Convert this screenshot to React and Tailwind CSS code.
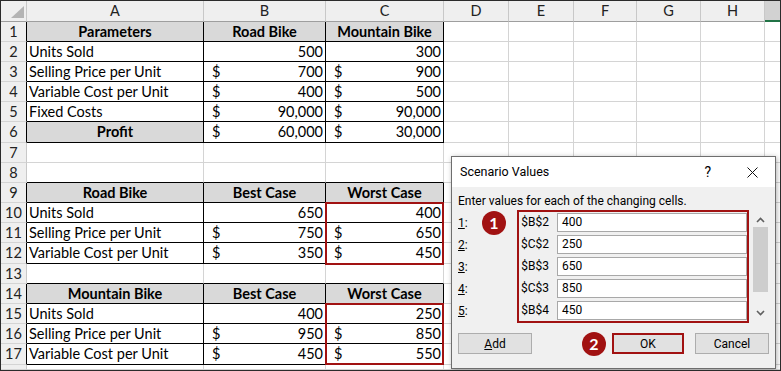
import React from 'react';

const COLS = ['w-[177px]', 'w-[122px]', 'w-[118px]'];
const EXTRA = ['w-[65px]', 'w-[65px]', 'w-[63px]', 'w-[64px]', 'w-[64px]'];
const LETTERS = ['A', 'B', 'C', 'D', 'E', 'F', 'G', 'H'];
const HEAD_W = ['w-[177px]', 'w-[122px]', 'w-[118px]', 'w-[65px]', 'w-[65px]', 'w-[63px]', 'w-[64px]', 'w-[64px]'];

const rows = [
  { n: 1, t: true, head: true, a: 'Parameters', b: 'Road Bike', c: 'Mountain Bike' },
  { n: 2, t: true, a: 'Units Sold', b: ['', '500'], c: ['', '300'] },
  { n: 3, t: true, a: 'Selling Price per Unit', b: ['$', '700'], c: ['$', '900'] },
  { n: 4, t: true, a: 'Variable Cost per Unit', b: ['$', '400'], c: ['$', '500'] },
  { n: 5, t: true, a: 'Fixed Costs', b: ['$', '90,000'], c: ['$', '90,000'] },
  { n: 6, t: true, h: 'h-[21px]', profit: true, a: 'Profit', b: ['$', '60,000'], c: ['$', '30,000'] },
  { n: 7 },
  { n: 8 },
  { n: 9, t: true, head: true, a: 'Road Bike', b: 'Best Case', c: 'Worst Case' },
  { n: 10, t: true, a: 'Units Sold', b: ['', '650'], c: ['', '400'] },
  { n: 11, t: true, a: 'Selling Price per Unit', b: ['$', '750'], c: ['$', '650'] },
  { n: 12, t: true, h: 'h-[21px]', a: 'Variable Cost per Unit', b: ['$', '350'], c: ['$', '450'] },
  { n: 13 },
  { n: 14, t: true, head: true, a: 'Mountain Bike', b: 'Best Case', c: 'Worst Case' },
  { n: 15, t: true, a: 'Units Sold', b: ['', '400'], c: ['', '250'] },
  { n: 16, t: true, a: 'Selling Price per Unit', b: ['$', '950'], c: ['$', '850'] },
  { n: 17, t: true, h: 'h-[21px]', a: 'Variable Cost per Unit', b: ['$', '450'], c: ['$', '550'] },
  // row 18 only peeks in at the bottom, its number is hidden
  { n: 18, h: 'flex-1', hideNum: true },
];

const values = [
  ['1', '$B$2', '400'],
  ['2', '$C$2', '250'],
  ['3', '$B$3', '650'],
  ['4', '$C$3', '850'],
  ['5', '$B$4', '450'],
];

function Content({ v, head, center }) {
  if (!v) return null;
  if (Array.isArray(v)) {
    return (
      <div className="flex w-full justify-between pl-[8px] pr-[2px]">
        <span>{v[0]}</span>
        <span>{v[1]}</span>
      </div>
    );
  }
  if (head || center) return <div className="w-full text-center font-bold">{v}</div>;
  return <div className="pl-[2px]">{v}</div>;
}

function SheetRow({ row, next }) {
  const inT = !!row.t;
  const bottomBlack = inT || (next && next.t);
  const rb = inT ? 'border-r-black' : 'border-r-[#d4d4d4]';
  const bb = bottomBlack ? 'border-b-black' : 'border-b-[#d4d4d4]';
  const vals = [row.a, row.b, row.c];

  return (
    <div className={`flex ${row.h || 'h-[20px]'} shrink-0`}>
      <div
        className={`w-[26px] shrink-0 flex items-center justify-center bg-[#efefef] border-r border-b border-b-[#d4d4d4] text-[#222] ${
          inT ? 'border-r-black' : 'border-r-[#c8c8c8]'
        }`}
      >
        {row.hideNum ? null : row.n}
      </div>
      {COLS.map((w, i) => {
        const gray = row.head || (row.profit && i === 0);
        return (
          <div
            key={i}
            className={`${w} shrink-0 flex items-center overflow-hidden whitespace-nowrap border-r border-b ${rb} ${bb} ${
              gray ? 'bg-[#d9d9d9]' : 'bg-white'
            }`}
          >
            <Content v={vals[i]} head={row.head} center={row.profit && i === 0} />
          </div>
        );
      })}
      {EXTRA.map((w, i) => (
        <div key={i} className={`${w} shrink-0 border-r border-b border-[#d4d4d4]`} />
      ))}
      <div className="flex-1 border-b border-[#d4d4d4]" />
    </div>
  );
}

function ScenarioDialog() {
  return (
    <div className="absolute left-[450px] top-[155px] w-[325px] h-[213px] border border-[#6e6e6e] bg-[#f0f0f0] shadow-[1px_1px_5px_rgba(0,0,0,0.3)] font-['Roboto',sans-serif] text-[12px] text-black">
      <div className="h-[30px] bg-white flex items-center pl-[8px] pr-[17px]">
        <span className="flex-1 text-[12.5px]">Scenario Values</span>
        <span className="mr-[36px] text-[14px]">?</span>
        <svg width="11" height="11" viewBox="0 0 11 11">
          <path d="M0.5 0.5L10.5 10.5M10.5 0.5L0.5 10.5" stroke="#111" strokeWidth="1" />
        </svg>
      </div>

      <div className="relative px-[6px] pt-[6px]">
        <div className="leading-[16px]">Enter values for each of the changing cells.</div>

        <div className="mt-[1px] flex">
          <div className="w-[59px] flex flex-col gap-[3px] pt-[3px]">
            {values.map(([n]) => (
              <div key={n} className="h-[19px] flex items-center">
                <span className="underline">{n}</span>:
              </div>
            ))}
          </div>

          <div className="w-[232px] h-[113px] border-2 border-[#a11212] flex flex-col gap-[3px] py-[1px]">
            {values.map(([n, ref, val]) => (
              <div key={n} className="h-[19px] flex">
                <div className="w-[38px] pr-[8px] text-right leading-[19px]">{ref}</div>
                <div className="flex-1 bg-white border border-[#a8a8a8] pl-[4px] leading-[17px]">{val}</div>
              </div>
            ))}
          </div>

          <div className="ml-[4px] mt-[2px] w-[15px] h-[109px] flex flex-col">
            <div className="h-[15px] flex items-center justify-center">
              <svg width="9" height="6" viewBox="0 0 9 6">
                <path d="M1 5L4.5 1.5L8 5" fill="none" stroke="#606060" strokeWidth="1.6" />
              </svg>
            </div>
            <div className="h-[65px] bg-[#cdcdcd]" />
            <div className="flex-1 flex items-end justify-center pb-[5px]">
              <svg width="9" height="6" viewBox="0 0 9 6">
                <path d="M1 1L4.5 4.5L8 1" fill="none" stroke="#606060" strokeWidth="1.6" />
              </svg>
            </div>
          </div>
        </div>

        <div className="mt-[10px] flex h-[21px]">
          <button className="w-[74px] h-full bg-[#e1e1e1] border border-[#adadad]">
            <span className="underline">A</span>dd
          </button>
          <button className="ml-auto w-[72px] h-full bg-[#e1e1e1] border-2 border-[#a11212]">OK</button>
          <button className="ml-[11px] w-[74px] h-full bg-[#e1e1e1] border border-[#adadad]">Cancel</button>
        </div>

        <div className="absolute left-[30px] top-[24px] w-[24px] h-[24px] rounded-full bg-[#a11212] text-white font-['Lato',sans-serif] font-bold text-[16px] flex items-center justify-center">
          1
        </div>
        <div className="absolute left-[130px] top-[145px] w-[24px] h-[24px] rounded-full bg-[#a11212] text-white font-['Lato',sans-serif] font-bold text-[16px] flex items-center justify-center">
          2
        </div>
      </div>
    </div>
  );
}

export default function App() {
  return (
    <div className="relative w-[781px] h-[371px] overflow-hidden border border-[#2b2b2b] bg-white font-['Lato',sans-serif] text-[14.5px] text-black flex flex-col">
      <div className="flex h-[21px] shrink-0">
        <div className="w-[26px] shrink-0 relative bg-[#efefef] border-r border-b border-r-[#c8c8c8] border-b-[#9e9e9e]">
          <svg className="absolute left-[10px] top-[5px]" width="13" height="12" viewBox="0 0 13 12">
            <path d="M13 0L13 12L0 12Z" fill="#b4b4b4" />
          </svg>
        </div>
        {LETTERS.map((l, i) => (
          <div
            key={l}
            className={`${HEAD_W[i]} shrink-0 flex items-center justify-center bg-[#efefef] border-r border-b border-r-[#c8c8c8] border-b-[#9e9e9e] text-[#222]`}
          >
            {l}
          </div>
        ))}
        <div className="flex-1 bg-[#d2d2d2] border-b-2 border-[#217346]" />
      </div>

      {rows.map((row, i) => (
        <SheetRow key={row.n} row={row} next={rows[i + 1]} />
      ))}

      <div className="absolute left-[324px] top-[201px] w-[119px] h-[63px] border-2 border-[#a11212]" />
      <div className="absolute left-[324px] top-[302px] w-[119px] h-[62px] border-2 border-[#a11212]" />

      <ScenarioDialog />
    </div>
  );
}
